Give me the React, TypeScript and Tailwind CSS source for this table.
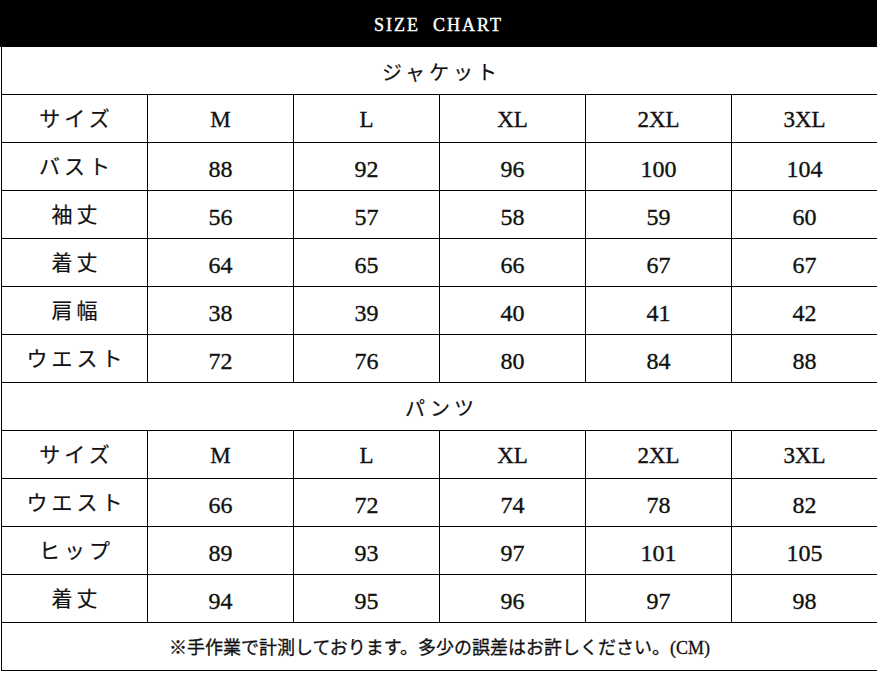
import React from "react";

const jp = "font-['Liberation_Serif','Noto_Sans_CJK_JP',serif]";

const sizes = ["M", "L", "XL", "2XL", "3XL"];

const jacket: [string, string[]][] = [
  ["バスト", ["88", "92", "96", "100", "104"]],
  ["袖丈", ["56", "57", "58", "59", "60"]],
  ["着丈", ["64", "65", "66", "67", "67"]],
  ["肩幅", ["38", "39", "40", "41", "42"]],
  ["ウエスト", ["72", "76", "80", "84", "88"]],
];

const pants: [string, string[]][] = [
  ["ウエスト", ["66", "72", "74", "78", "82"]],
  ["ヒップ", ["89", "93", "97", "101", "105"]],
  ["着丈", ["94", "95", "96", "97", "98"]],
];

function Row({ label, values, head }: { label: string; values: string[]; head?: boolean }) {
  return (
    <div className="flex h-[48px] border-b border-black">
      <div className="flex w-[146px] items-center justify-center border-l border-black pt-[3px] pl-[4px] text-[21px] tracking-[4px] text-[#111] [-webkit-text-stroke:0.2px_#111]">
        {label}
      </div>
      {values.map((v, i) => (
        <div
          key={i}
          className={`flex w-[146px] items-center justify-center border-l border-black pt-[4px] text-[#111] [-webkit-text-stroke:0.35px_#111] ${
            head ? "text-[23px]" : "text-[24px]"
          }`}
        >
          {v}
        </div>
      ))}
    </div>
  );
}

function Section({ title, rows }: { title: string; rows: [string, string[]][] }) {
  return (
    <>
      <div className="flex h-[48px] items-center justify-center border-b border-l border-black pt-[4px] pl-[4px] text-[20px] tracking-[4px] text-[#111] [-webkit-text-stroke:0.2px_#111]">
        {title}
      </div>
      <Row label="サイズ" values={sizes} head />
      {rows.map(([l, v]) => (
        <Row key={l + v[0]} label={l} values={v} />
      ))}
    </>
  );
}

export default function App() {
  return (
    <div className={`w-[877px] h-[673px] bg-white overflow-hidden ${jp}`}>
      <div className="flex h-[47px] items-center justify-center bg-black pt-[4px] text-[18px] tracking-[2px] whitespace-pre text-white [-webkit-text-stroke:0.4px_#fff]">
        SIZE  CHART
      </div>
      <div className="ml-[1px] w-[876px]">
        <Section title="ジャケット" rows={jacket} />
        <Section title="パンツ" rows={pants} />
        <div className="flex h-[48px] items-center justify-center border-b border-l border-black pt-[3px] text-[18px] text-[#111] [-webkit-text-stroke:0.3px_#111]">
          ※手作業で計測しております。多少の誤差はお許しください。(CM)
        </div>
      </div>
    </div>
  );
}
